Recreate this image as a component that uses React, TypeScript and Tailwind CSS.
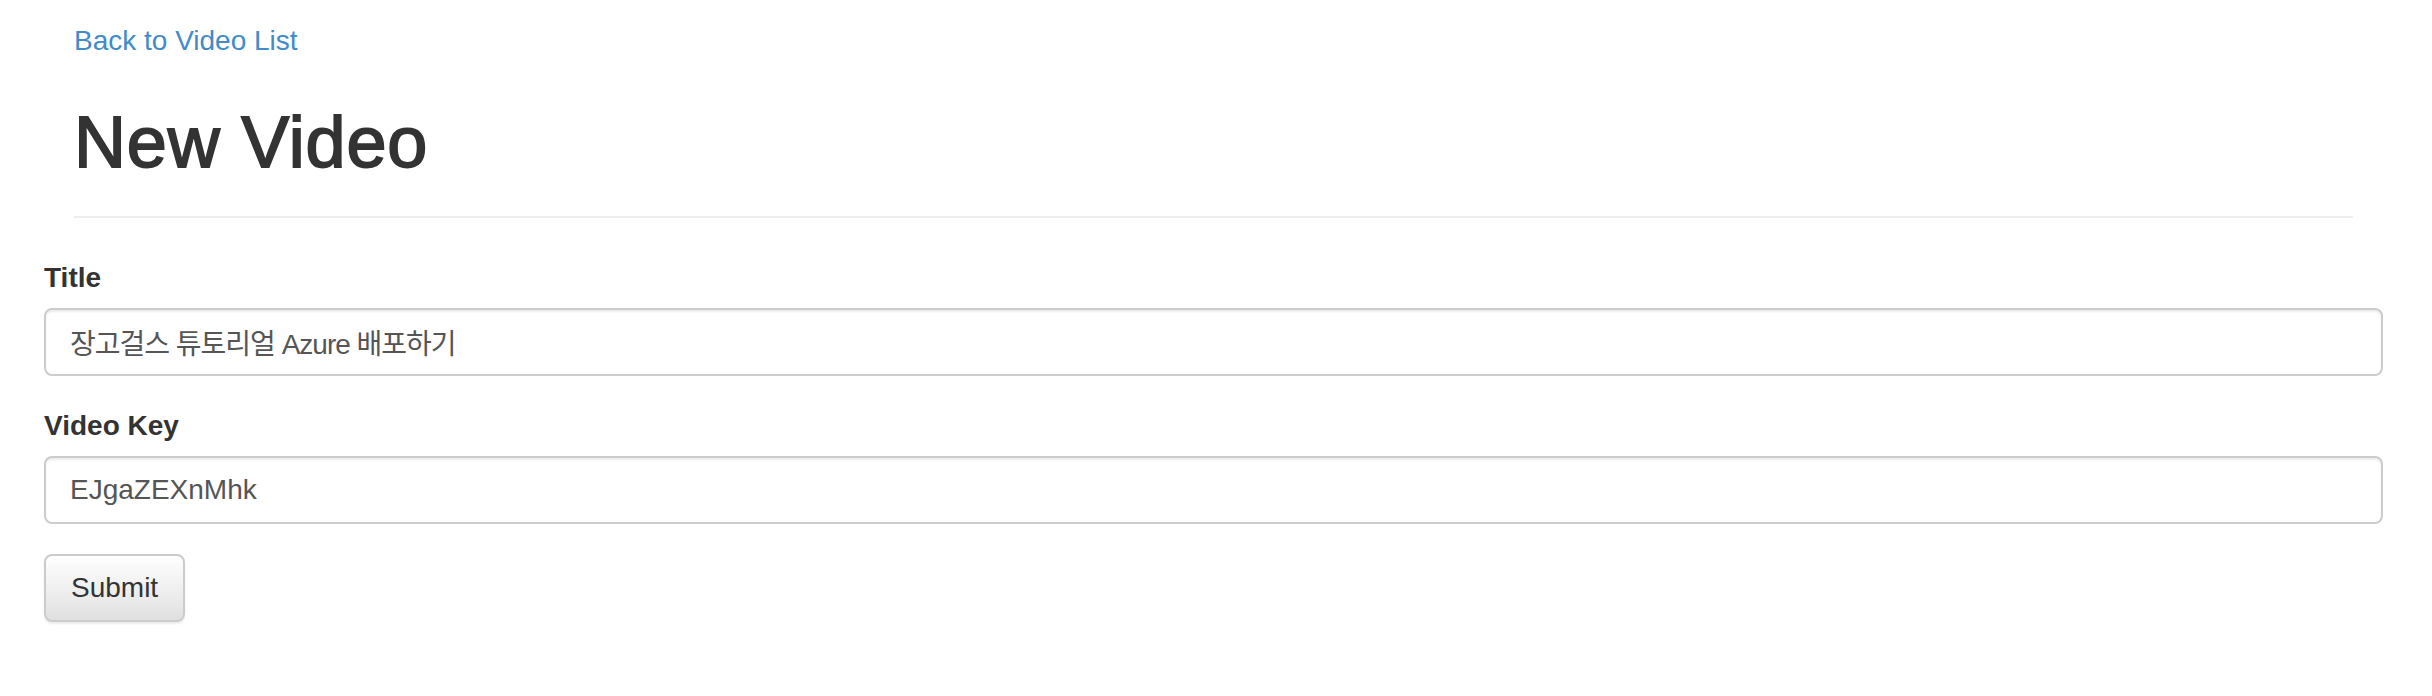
import React from "react";

export default function App() {
  return (
    <div className="min-h-[696px] w-full bg-white pl-[44px] pr-[49px] font-['Liberation_Sans','Noto_Sans_CJK_KR',Arial,sans-serif] text-[#333333]">
      <div className="px-[30px]">
        <div className="pt-[21px]">
          <a href="#" className="block text-[28px] leading-[40px] text-[#428bca]">
            Back to Video List
          </a>
        </div>
        <div className="mt-[42px] border-b-2 border-[#eeeeee] pb-[34px]">
          <h1 className="text-[72px] font-medium leading-[79px] tracking-[0.8px] text-[#333333] [-webkit-text-stroke-width:1.8px] [-webkit-text-stroke-color:#333333]">
            New Video
          </h1>
        </div>
      </div>

      <form className="mt-[40px]" onSubmit={(e) => e.preventDefault()}>
        <div className="mb-[30px]">
          <label className="mb-[10px] block text-[28px] font-bold leading-[40px] text-[#333333]">
            Title
          </label>
          <input
            type="text"
            defaultValue="장고걸스 튜토리얼 Azure 배포하기"
            className="block h-[68px] w-full rounded-[8px] border-2 border-[#cccccc] bg-white px-[24px] text-[28px] leading-[40px] tracking-[-1px] text-[#555555] shadow-[inset_0_2px_2px_rgba(0,0,0,0.075)] outline-none"
          />
        </div>
        <div className="mb-[30px]">
          <label className="mb-[10px] block text-[28px] font-bold leading-[40px] text-[#333333]">
            Video Key
          </label>
          <input
            type="text"
            defaultValue="EJgaZEXnMhk"
            className="block h-[68px] w-full rounded-[8px] border-2 border-[#cccccc] bg-white px-[24px] text-[28px] leading-[40px] text-[#555555] shadow-[inset_0_2px_2px_rgba(0,0,0,0.075)] outline-none"
          />
        </div>
        <button
          type="submit"
          className="h-[68px] rounded-[8px] border-2 border-[#cccccc] bg-gradient-to-b from-white to-[#e0e0e0] px-[25px] text-[28px] leading-[40px] text-[#333333] shadow-[0_2px_2px_rgba(0,0,0,0.075)]"
        >
          Submit
        </button>
      </form>
    </div>
  );
}
